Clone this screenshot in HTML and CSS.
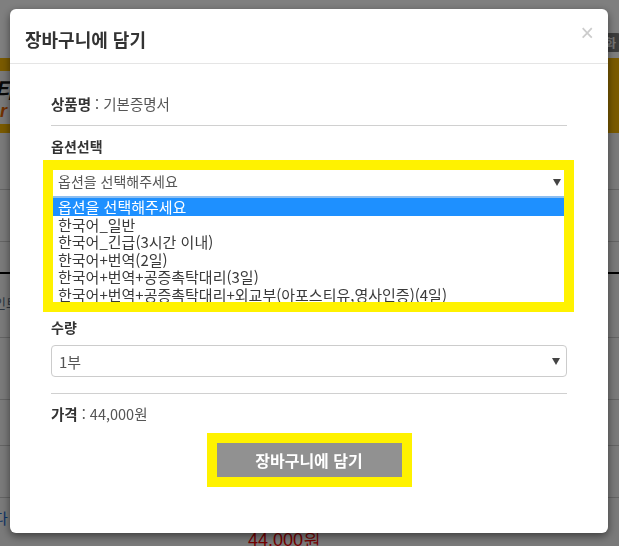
FILE: index.html
```html
<html lang="ko">
<head>
    <meta charset="UTF-8">
    <meta name="viewport" content="width=device-width, initial-scale=1">
    <title>장바구니에 담기</title>
    <link rel="stylesheet" href="styles.css">
</head>
<body>

    <!-- page behind the modal -->
    <div class="page">
        <div class="top">
            <span class="badge">화</span>
        </div>
        <div class="banner">
            <div class="banner-in">
                <b>게티</b>
                <i>er</i>
            </div>
        </div>
        <ul class="rows">
            <li class="r1"></li>
            <li class="r2"></li>
            <li class="r3"></li>
            <li class="r4"><span class="blue">인트</span></li>
            <li class="r5"></li>
            <li class="r6"></li>
            <li class="r7"></li>
            <li class="r8"><span class="blue">다</span><span class="red">44,000원</span></li>
        </ul>
    </div>

    <div class="dim"></div>

    <section class="modal-wrap">
        <div class="modal">
            <div class="modal-header">
                <h4>장바구니에 담기</h4>
                <span class="close">&times;</span>
            </div>
            <div class="modal-body">
                <p class="info"><b>상품명</b> : 기본증명서</p>
                <div class="sep"></div>

                <p class="label">옵션선택</p>
                <div class="hl">
                    <div class="fake-select">
                        <span>옵션을 선택해주세요</span>
                        <i class="caret"></i>
                    </div>
                    <ul class="options">
                        <li class="on">옵션을 선택해주세요</li>
                        <li>한국어_일반</li>
                        <li>한국어_긴급(3시간 이내)</li>
                        <li>한국어+번역(2일)</li>
                        <li>한국어+번역+공증촉탁대리(3일)</li>
                        <li>한국어+번역+공증촉탁대리+외교부(아포스티유,영사인증)(4일)</li>
                    </ul>
                </div>

                <p class="label qty-label">수량</p>
                <div class="qty">
                    <span>1부</span>
                    <i class="caret"></i>
                </div>
                <div class="sep sep2"></div>

                <p class="info"><b>가격</b> : 44,000원</p>
                <div class="btn-box">
                    <button class="btn">장바구니에 담기</button>
                </div>
            </div>
        </div>
    </section>

</body>
</html>
```

FILE: styles.css
```css
html,body {
	width:100%;
	height:100%;
	margin:0;
	padding:0;
	overflow:hidden;
	font-family:"Noto Sans CJK KR", "Liberation Sans", sans-serif;
	background:#fff;
}
p,h4,ul {
	margin:0;
	padding:0;
}
ul {
	list-style:none;
}

/* page behind */
.page {
	position:relative;
}
.top {
	height:58px;
	background:#fff;
	position:relative;
}
.badge {
	position:absolute;
	right:-6px;
	top:33px;
	width:24px;
	height:19px;
	line-height:19px;
	border-radius:8px;
	background:#7a7a7a;
	color:#eee;
	font-size:12px;
	font-weight:bold;
	text-indent:4px;
}
.banner {
	height:75px;
	background:#f4b500;
	overflow:hidden;
}
.banner-in {
	width:60px;
	height:53px;
	margin-top:13px;
	background:#f2f2f2;
	position:relative;
}
.banner-in b {
	display:block;
	font-size:22px;
	line-height:26px;
	font-style:italic;
	color:#111;
	margin-left:-26px;
	padding-top:4px;
}
.banner-in i {
	display:block;
	font-family:"Liberation Sans", sans-serif;
	font-size:18px;
	font-weight:bold;
	color:#e06000;
	margin-left:-10px;
}
.rows li {
	border-bottom:1px solid #c8c8c8;
	background:#f4f4f4;
	position:relative;
	font-size:13px;
}
.rows .r1 { height:56px; }
.rows .r2 { height:51px; }
.rows .r3 { height:30px; border-bottom:2px solid #000; }
.rows .r4 { height:63px; }
.rows .r5 { height:61px; }
.rows .r6 { height:45px; }
.rows .r7 { height:51px; }
.rows .r8 { height:60px; }
.rows .blue {
	color:#5b6c80;
	display:inline-block;
	margin:19px 0 0 -6px;
}
.rows .r8 .blue {
	color:#1a66c8;
	margin-top:9px;
	font-size:15px;
}
.rows .red {
	position:absolute;
	left:248px;
	top:30px;
	color:#e80000;
	font-size:18px;
	font-family:"Liberation Sans", sans-serif;
}

.dim {
	position:fixed;
	left:0;
	top:0;
	right:0;
	bottom:0;
	background:rgba(0,0,0,.5);
}

/* modal */
.modal-wrap {
	position:fixed;
	left:0;
	top:0;
	right:0;
	bottom:0;
	padding:9px 0 0 10px;
}
.modal {
	width:598px;
	background:#fff;
	border-radius:6px;
	box-shadow:0 3px 9px rgba(0,0,0,.5);
}
.modal-header {
	display:flex;
	justify-content:space-between;
	align-items:flex-start;
	padding:20px 14px 14px 15px;
	border-bottom:1px solid #e5e5e5;
}
.modal-header h4 {
	font-size:18px;
	line-height:20px;
	font-weight:bold;
	color:#333;
}
.close {
	font-family:"Liberation Sans", sans-serif;
	font-size:23px;
	line-height:23px;
	color:#ccc;
	margin-top:-7px;
	cursor:pointer;
}
.modal-body {
	padding:30px 41px 46px;
}
.info {
	font-size:14.5px;
	line-height:20px;
	color:#555;
}
.info b {
	color:#333;
}
.sep {
	height:1px;
	background:#d0d0d0;
	margin:11px 0 10px;
}
.label {
	font-size:14px;
	line-height:20px;
	font-weight:bold;
	color:#333;
}

/* yellow highlight around the open select */
.hl {
	border:10px solid #fff200;
	margin:4px -7px 0 -8px;
	background:#fff;
}
.fake-select {
	height:21px;
	padding:0 3px 5px 5px;
	display:flex;
	align-items:center;
	justify-content:space-between;
	font-size:14px;
	color:#555;
}
.caret {
	width:0;
	height:0;
	border-left:4px solid transparent;
	border-right:4px solid transparent;
	border-top:7px solid #444;
}
.fake-select .caret {
	margin-top:3px;
}
.options {
	height:104px;
	overflow:hidden;
	border-top:2px solid #8dbef0;
}
.options li {
	height:17.5px;
	line-height:17.5px;
	padding-left:5px;
	font-size:15px;
	color:#3a3a3a;
	white-space:nowrap;
}
.options li.on {
	background:#1e90ff;
	color:#fff;
}

.qty-label {
	margin-top:5px;
}
.qty {
	margin-top:8px;
	height:30px;
	border:1px solid #ccc;
	border-radius:4px;
	display:flex;
	align-items:center;
	justify-content:space-between;
	padding:0 6px 0 7px;
	font-size:15px;
	color:#555;
}
.sep2 {
	margin:16px 0 10px;
}
.btn-box {
	display:flex;
	justify-content:center;
	margin-top:9px;
}
.btn {
	-webkit-appearance:none;
	outline:none;
	cursor:pointer;
	width:205px;
	height:54px;
	border:10px solid #fff200;
	background:#919191;
	color:#fff;
	font-family:"Noto Sans CJK KR", sans-serif;
	font-size:16px;
	font-weight:bold;
	padding:0;
}
```
